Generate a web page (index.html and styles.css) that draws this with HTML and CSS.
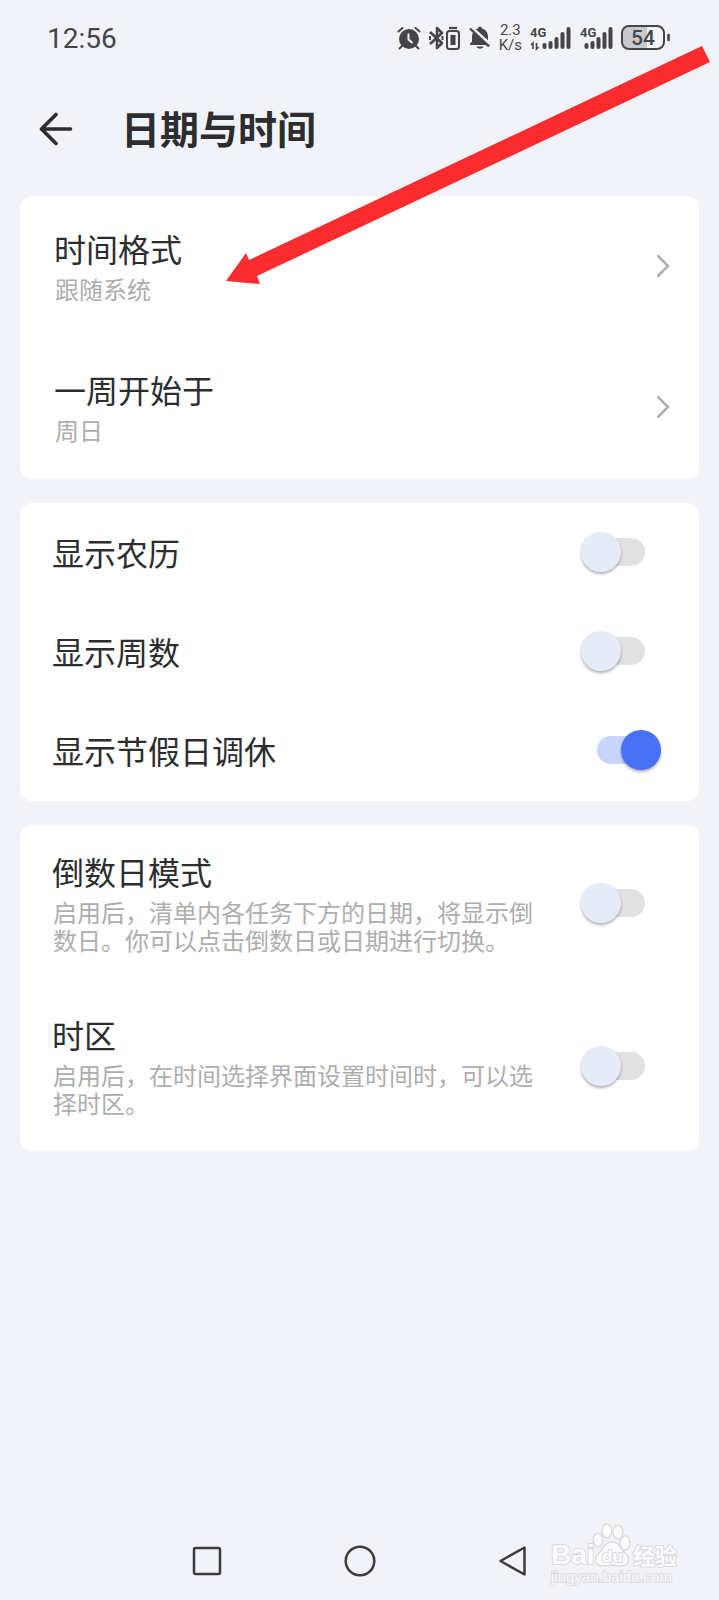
FILE: index.html
```
<!DOCTYPE html>
<html lang="zh-CN">
<head>
    <meta charset="UTF-8">
    <meta name="viewport" content="width=device-width, initial-scale=1">
    <title>日期与时间</title>
    <link rel="stylesheet" href="styles.css">
</head>
<body>
    <div class="status-bar">
        <div class="clock">12:56</div>
        <div class="status-icons">
            <svg width="24" height="24" viewBox="0 0 24 24">
                <circle cx="12" cy="13" r="10" fill="#444548"/>
                <path d="M5 20l-2.500 2.500M19 20l2.500 2.500M1.500 5.500L5.500 2M22.500 5.500L18.500 2" stroke="#444548" stroke-width="2" stroke-linecap="round"/>
                <path d="M11.500 7.500v6l4 3.500" fill="none" stroke="#f2f3f8" stroke-width="2"/>
            </svg>
            <svg width="32" height="24" viewBox="0 0 32 24">
                <path d="M1 6l12 11-5 5V2l5 5L1 18" fill="none" stroke="#444548" stroke-width="2.600" stroke-linejoin="round"/>
                <path d="M1 10v4M13.500 10v4" stroke="#444548" stroke-width="2"/>
                <rect x="18" y="5" width="12" height="18" rx="2.500" fill="none" stroke="#444548" stroke-width="2"/>
                <rect x="21.500" y="9" width="5" height="10" fill="#444548"/>
                <path d="M20 2h8" stroke="#444548" stroke-width="2.200"/>
            </svg>
            <svg width="22" height="24" viewBox="0 0 22 24">
                <path d="M1 19v-1.500l2-2V11c0-4 2-7.500 6-8.500 0-2.500 4-2.500 4 0 4 1 6 4.500 6 8.500v4.500l2 2V19z" fill="#444548"/>
                <path d="M7.500 20.500h7c-1 3-6 3-7 0z" fill="#444548"/>
                <path d="M2 1l19 17" stroke="#f2f3f8" stroke-width="3"/>
                <path d="M1 2.500l19 18" stroke="#444548" stroke-width="2.400"/>
            </svg>
            <div class="speed">
                <div>2.3</div>
                <div>K/s</div>
            </div>
            <svg width="42" height="26" viewBox="0 0 42 26">
                <text class="net" x="0" y="12">4G</text>
                <path d="M3 24v-6l-2 2M6.500 18v6l2-2" fill="none" stroke="#444548" stroke-width="1.600"/>
                <path d="M14.500 20v2M20.500 18v4M26.500 14v8M32.500 9v13M38.500 4v18" stroke="#444548" stroke-width="4" stroke-linecap="round"/>
            </svg>
            <svg width="33" height="26" viewBox="0 0 33 26">
                <text class="net" x="0" y="12">4G</text>
                <path d="M6.500 20v2M12.500 18v4M18.500 14v8M24.500 9v13M30.500 4v18" stroke="#444548" stroke-width="4" stroke-linecap="round"/>
            </svg>
            <svg width="50" height="26" viewBox="0 0 50 26">
                <path d="M8 2h18v22H8a6 6 0 0 1-6-6V8a6 6 0 0 1 6-6z" fill="#c9cacf"/>
                <rect x="1" y="1" width="42" height="23" rx="7" fill="none" stroke="#444548" stroke-width="2"/>
                <path d="M47.500 10v5" stroke="#444548" stroke-width="2.600" stroke-linecap="round"/>
                <text class="level" x="22" y="20" text-anchor="middle">54</text>
            </svg>
        </div>
    </div>

    <header class="header">
        <button class="back" aria-label="返回">
            <svg width="34" height="34" viewBox="0 0 34 34">
                <path d="M17 2.500L2.500 17 17 31.500M3 17h28.500" fill="none" stroke="#2c2d2f" stroke-width="3.600" stroke-linecap="round" stroke-linejoin="round"/>
            </svg>
        </button>
        <h1>日期与时间</h1>
    </header>

    <main class="settings">
        <section class="card links">
            <button class="row">
                <span class="text">
                    <span class="name">时间格式</span>
                    <span class="desc">跟随系统</span>
                </span>
                <svg class="chevron" width="14" height="24" viewBox="0 0 14 24">
                    <path d="M1.500 1.500L12 12 1.500 22.500" fill="none" stroke="#adadad" stroke-width="2.500"/>
                </svg>
            </button>
            <button class="row">
                <span class="text">
                    <span class="name">一周开始于</span>
                    <span class="desc">周日</span>
                </span>
                <svg class="chevron" width="14" height="24" viewBox="0 0 14 24">
                    <path d="M1.500 1.500L12 12 1.500 22.500" fill="none" stroke="#adadad" stroke-width="2.500"/>
                </svg>
            </button>
        </section>

        <section class="card toggles">
            <label class="row">
                <span class="name">显示农历</span>
                <input class="switch" type="checkbox">
            </label>
            <label class="row">
                <span class="name">显示周数</span>
                <input class="switch" type="checkbox">
            </label>
            <label class="row">
                <span class="name">显示节假日调休</span>
                <input class="switch" type="checkbox" checked>
            </label>
        </section>

        <section class="card modes">
            <label class="row">
                <span class="text">
                    <span class="name">倒数日模式</span>
                    <span class="desc">启用后，清单内各任务下方的日期，将显示倒数日。你可以点击倒数日或日期进行切换。</span>
                </span>
                <input class="switch" type="checkbox">
            </label>
            <label class="row">
                <span class="text">
                    <span class="name">时区</span>
                    <span class="desc">启用后，在时间选择界面设置时间时，可以选择时区。</span>
                </span>
                <input class="switch" type="checkbox">
            </label>
        </section>
    </main>

    <nav class="nav-bar">
        <button aria-label="最近任务">
            <svg width="32" height="32" viewBox="0 0 32 32">
                <rect x="3" y="3" width="26" height="26" rx="1.500" fill="none" stroke="#3a3b3d" stroke-width="2.500"/>
            </svg>
        </button>
        <button aria-label="主屏幕">
            <svg width="32" height="32" viewBox="0 0 32 32">
                <circle cx="16" cy="16" r="14.300" fill="none" stroke="#3a3b3d" stroke-width="2.500"/>
            </svg>
        </button>
        <button aria-label="后退">
            <svg width="32" height="32" viewBox="0 0 32 32">
                <path d="M27.500 2.500v27L3.500 16z" fill="none" stroke="#3a3b3d" stroke-width="2.500" stroke-linejoin="round"/>
            </svg>
        </button>
    </nav>

    <!-- red pointer to the first row -->
    <svg class="pointer" width="484" height="239" viewBox="0 0 484 239">
        <path d="M0 235L20 207l3 7L476 0l8 16L31 230l3 8z" fill="#fb2c2f"/>
    </svg>

    <svg class="watermark" width="136" height="70" viewBox="0 0 136 70">
        <g fill="#fcfcfe" stroke="#d9dae0" stroke-width="1.400">
            <text class="mark" x="2" y="42">Bai</text>
            <ellipse cx="49" cy="18" rx="5" ry="7"/>
            <ellipse cx="58" cy="9" rx="5" ry="7"/>
            <ellipse cx="69" cy="10" rx="5" ry="7"/>
            <ellipse cx="76" cy="21" rx="5" ry="7"/>
            <path d="M63 20c8 0 9 8 13 11 7 6 3 13-4 13-4 0-6-1-9-1s-5 1-9 1c-8 0-10-7-4-13 4-3 5-11 13-11z"/>
            <text class="du" x="53" y="40">du</text>
            <text class="cn" x="84" y="42">经验</text>
        </g>
        <text class="site" x="2" y="60">jingyan.baidu.com</text>
    </svg>
</body>
</html>
```
FILE: styles.css
```
* {
    box-sizing: border-box;
}

body {
    margin: 0;
    min-height: 100vh;
    display: flex;
    flex-direction: column;
    position: relative;
    background: #f2f3f9;
    color: #2c2d2f;
    font-family: "Noto Sans CJK SC", sans-serif;
}

button {
    border: none;
    background: none;
    padding: 0;
    font: inherit;
    color: inherit;
    text-align: left;
    cursor: pointer;
}

svg {
    display: block;
    flex-shrink: 0;
}

/* status bar */
.status-bar {
    display: flex;
    justify-content: space-between;
    align-items: center;
    height: 76px;
    padding: 0 48px 0 47px;
    color: #444548;
    font-family: Roboto, sans-serif;
}

.clock {
    font-size: 28px;
}

.status-icons {
    display: flex;
    align-items: center;
    gap: 8px;
}

.speed {
    font-size: 15px;
    line-height: 15px;
    text-align: center;
}

.net {
    font: bold 13px Roboto, sans-serif;
    fill: #444548;
}

.level {
    font: 500 21px Roboto, sans-serif;
    fill: #444548;
}

/* page header */
.header {
    display: flex;
    align-items: center;
    gap: 48px;
    height: 106px;
    padding: 0 39px;
}

.header h1 {
    margin: 0 0 4px;
    font-size: 39px;
    line-height: 56px;
    font-weight: 700;
}

/* cards */
.settings {
    display: flex;
    flex-direction: column;
    gap: 24px;
    padding: 14px 20px;
}

.card {
    background: #fff;
    border-radius: 12px;
}

.row {
    display: flex;
    justify-content: space-between;
    align-items: center;
    width: 100%;
    padding-left: 32px;
}

.links {
    padding-bottom: 1px;
}

.links .row {
    padding: 33px 29px 34px 34px;
}

.toggles {
    padding-bottom: 1px;
}

.toggles .row {
    padding-top: 29px;
    padding-bottom: 30px;
}

.modes .row {
    padding-top: 27px;
    padding-bottom: 34px;
}

.text {
    flex: 1;
}

.name {
    display: block;
    font-size: 32px;
    line-height: 38px;
}

.desc {
    display: block;
    margin-top: 8px;
    padding-left: 1px;
    font-size: 24px;
    line-height: 28px;
    color: #adadad;
}

/* switch */
.switch {
    appearance: none;
    position: relative;
    flex-shrink: 0;
    width: 80px;
    height: 40px;
    margin: 0 38px 0 44px;
    cursor: pointer;
}

.switch::before {
    content: "";
    position: absolute;
    top: 6px;
    left: 16px;
    width: 48px;
    height: 28px;
    border-radius: 14px;
    background: #e1e1e1;
}

.switch::after {
    content: "";
    position: absolute;
    top: 0;
    left: 0;
    width: 40px;
    height: 40px;
    border-radius: 50%;
    background: #e5ebf8;
    box-shadow: 0 2px 3px rgba(0, 0, 0, 0.3);
}

.switch:checked::before {
    background: #c8d5fc;
}

.switch:checked::after {
    left: 40px;
    background: #4772f6;
}

/* system navigation */
.nav-bar {
    display: flex;
    justify-content: center;
    margin-top: auto;
    height: 78px;
}

.nav-bar button {
    display: flex;
    justify-content: center;
    align-items: center;
    width: 153px;
}

/* overlays */
.pointer {
    position: absolute;
    top: 46px;
    left: 226px;
    pointer-events: none;
}

.watermark {
    position: absolute;
    right: 34px;
    bottom: 8px;
    pointer-events: none;
}

.watermark text {
    paint-order: stroke;
    stroke-width: 2px;
}

.mark {
    font: bold 28px "Liberation Sans", sans-serif;
}

.du {
    font: bold 17px "Liberation Sans", sans-serif;
}

.cn {
    font: bold 22px "Noto Sans CJK SC", sans-serif;
}

.site {
    font: 15px "Liberation Sans", sans-serif;
    fill: #fafafd;
    stroke: #dddee3;
}
```
